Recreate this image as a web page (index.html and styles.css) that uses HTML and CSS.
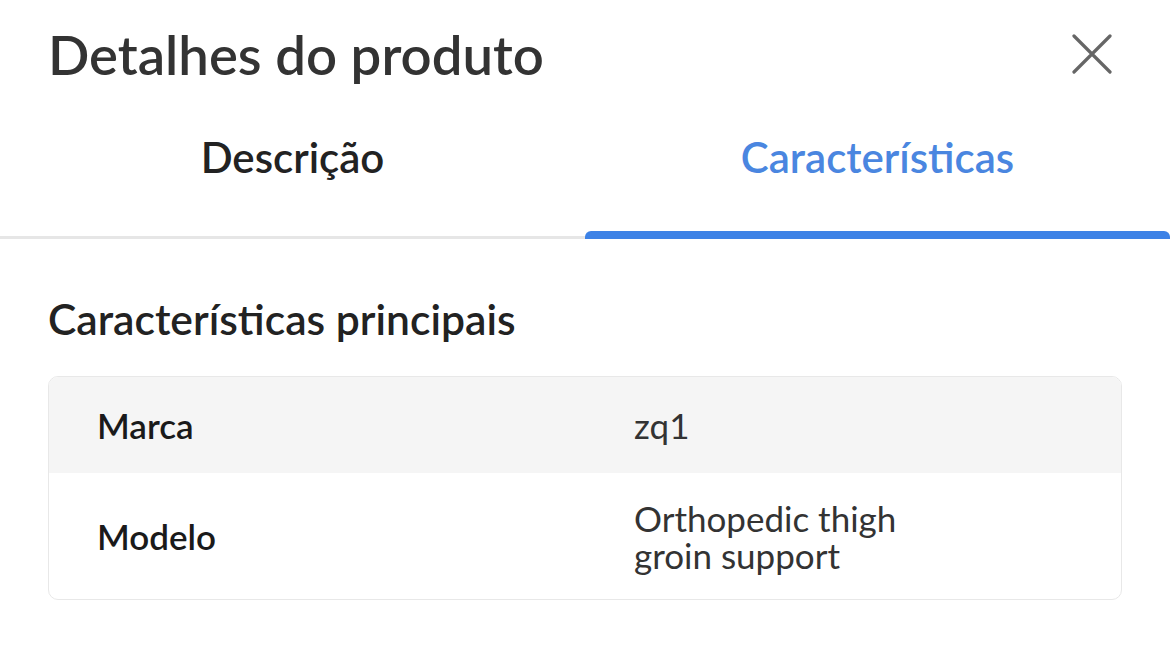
FILE: index.html
```html
<!DOCTYPE html>
<html lang="pt">
<head>
    <meta charset="UTF-8">
    <meta name="viewport" content="width=device-width, initial-scale=1.0">
    <title>Detalhes do produto</title>
    <link rel="stylesheet" href="styles.css">
</head>
<body>
    <div class="header">
        <h1>Detalhes do produto</h1>
        <div class="close-button">
            <svg width="40" height="40" viewBox="0 0 40 40">
                <path d="M2 2 L38 38 M38 2 L2 38" stroke="#666" stroke-width="3.2" stroke-linecap="round"/>
            </svg>
        </div>
    </div>

    <div class="tabs">
        <div class="tab">Descrição</div>
        <div class="tab active">Características</div>
    </div>

    <div class="content">
        <h2>Características principais</h2>
        <div class="specs">
            <div class="spec-row shaded">
                <div class="spec-label">Marca</div>
                <div class="spec-value">zq1</div>
            </div>
            <div class="spec-row">
                <div class="spec-label">Modelo</div>
                <div class="spec-value">Orthopedic thigh<br>groin support</div>
            </div>
        </div>
    </div>
</body>
</html>
```

FILE: styles.css
```css
body {
    margin: 0;
    font-family: Lato, "Open Sans", sans-serif;
    color: #333;
    background: #fff;
}

.header {
    display: flex;
    justify-content: space-between;
    align-items: center;
    padding: 25px 58px 0 48px;
    height: 58px;
}
.header h1 {
    margin: 0;
    font-size: 54.5px;
    font-weight: 600;
    color: #333;
    line-height: 58px;
}
.close-button {
    width: 40px;
    height: 40px;
    cursor: pointer;
}

.tabs {
    display: flex;
    margin-top: 29px;
    border-bottom: 3px solid #e6e6e6;
}
.tab {
    flex: 1;
    text-align: center;
    font-size: 42px;
    font-weight: 600;
    color: #222;
    padding: 20px 0 54px;
    line-height: 50px;
    position: relative;
    cursor: pointer;
}
.tab.active {
    color: #4a86e0;
}
.tab.active::after {
    content: "";
    position: absolute;
    left: 0;
    right: 0;
    bottom: -3px;
    height: 8px;
    background: #3d82e6;
    border-radius: 6px 6px 0 0;
}

.content {
    padding: 0 48px;
}
.content h2 {
    margin: 55px 0 32px;
    font-size: 42.6px;
    font-weight: 600;
    color: #222;
    line-height: 50px;
}

.specs {
    border: 1px solid #e8e8e8;
    border-radius: 10px;
    overflow: hidden;
}
.spec-row {
    display: flex;
    align-items: center;
    padding: 0 48px;
    font-size: 35px;
    line-height: 42px;
}
.spec-row.shaded {
    background: #f5f5f5;
    height: 96px;
}
.spec-row + .spec-row {
    height: 126px;
}
.spec-label {
    width: 537px;
    font-weight: 600;
    color: #1a1a1a;
}
.spec-value {
    flex: 1;
    color: #333;
}
.spec-row + .spec-row .spec-value {
    line-height: 37px;
    padding-top: 2px;
}
```
